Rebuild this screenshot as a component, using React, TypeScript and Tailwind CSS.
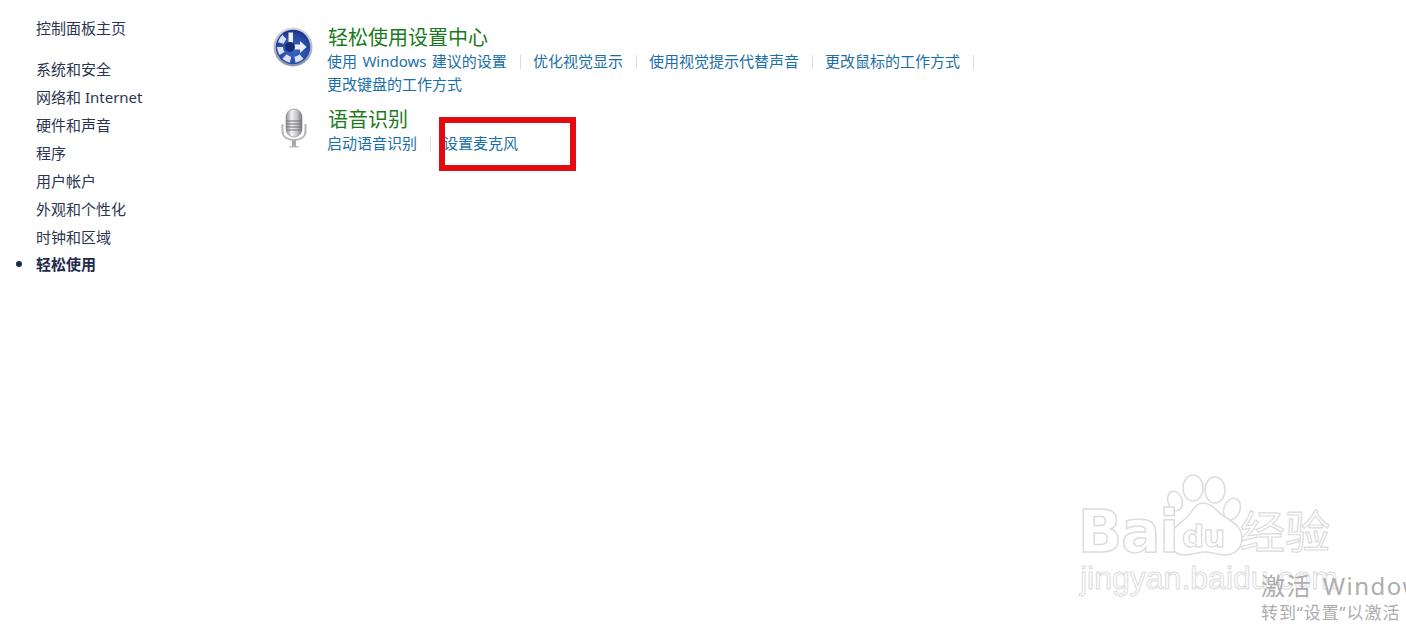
const FONT = "font-['Noto_Sans','Noto_Sans_CJK_SC',sans-serif]"

const NAV = ['系统和安全', '网络和 Internet', '硬件和声音', '程序', '用户帐户', '外观和个性化', '时钟和区域']

function EaseIcon() {
  return (
    <svg width="40" height="40" viewBox="0 0 40 40" className="block">
      <defs>
        <radialGradient id="ease-bg" cx="50%" cy="60%" r="60%">
          <stop offset="0%" stopColor="#3a66c4" />
          <stop offset="70%" stopColor="#2a4aa8" />
          <stop offset="100%" stopColor="#1b3284" />
        </radialGradient>
        <linearGradient id="ease-rim" x1="0" x2="0" y1="0" y2="1">
          <stop offset="0%" stopColor="#d5d9e2" />
          <stop offset="100%" stopColor="#8d97ad" />
        </linearGradient>
      </defs>
      <circle cx="20" cy="20" r="19.5" fill="url(#ease-rim)" />
      <circle cx="20" cy="20" r="17.2" fill="url(#ease-bg)" />
      <g fill="none" stroke="#e8edf8" strokeWidth="6" opacity="0.92">
        <path d="M11.5 10 A13 13 0 0 0 7.800 16" />
        <path d="M7 20 A13 13 0 0 0 9 26.500" />
        <path d="M11.500 29.500 A13 13 0 0 0 17.500 32.800" />
        <path d="M22 32.800 A13 13 0 0 0 28.500 29.500" />
      </g>
      <path d="M15.500 5.500h4.500v10h-4.500z" fill="#eef1f9" />
      <path d="M21 17.500h6v-3.500l6.500 6-6.500 6v-3.500h-6z" fill="#eef1f9" />
      <circle cx="17" cy="20" r="5" fill="#142c74" />
    </svg>
  )
}

function MicIcon() {
  return (
    <svg width="30" height="42" viewBox="0 0 30 42" className="block">
      <defs>
        <linearGradient id="mic-body" x1="0" x2="1" y1="0" y2="0">
          <stop offset="0%" stopColor="#8c8c92" />
          <stop offset="35%" stopColor="#f2f2f4" />
          <stop offset="70%" stopColor="#c2c2c8" />
          <stop offset="100%" stopColor="#77777d" />
        </linearGradient>
      </defs>
      <path d="M3.500 16v7c0 6 5 9 11.500 9s11.500-3 11.500-9v-7" fill="none" stroke="#b4b4ba" strokeWidth="2" />
      <rect x="13" y="32" width="4" height="7" fill="#a8a8ae" />
      <rect x="10.500" y="38" width="9" height="1.500" fill="#b8b8be" />
      <rect x="7" y="1" width="16" height="28" rx="8" fill="url(#mic-body)" stroke="#85858b" strokeWidth="0.600" />
      <g stroke="#6f6f76" strokeWidth="1.200">
        <path d="M7.500 13h15M7.500 16h15M7.500 19h15M7.500 22h15" />
      </g>
    </svg>
  )
}

function Links({ items }: { items: string[] }) {
  return (
    <>
      {items.map(t => (
        <span key={t} className="flex items-center">
          <a className="text-[15px] leading-[23px] text-[#1a6fa8] whitespace-nowrap [word-spacing:1.5px]">{t}</a>
          <span className="ml-[13px] mr-[12px] h-[14px] w-px bg-[#d9dde0]" />
        </span>
      ))}
    </>
  )
}

function PawLogo() {
  return (
    <svg width="84" height="90" viewBox="0 0 84 90" className="block">
      <g fill="#fff" stroke="#dcdcdc" strokeWidth="1.500">
        <ellipse cx="10" cy="31" rx="7" ry="10" transform="rotate(-18 10 31)" />
        <ellipse cx="28" cy="18" rx="10" ry="13" />
        <ellipse cx="50" cy="20" rx="10" ry="13" />
        <ellipse cx="67" cy="39" rx="8" ry="11" transform="rotate(20 67 39)" />
        <path d="M38 33C47 33 52 42 60 47C70 53 77 58 77 68C77 80 68 85 60 85C52 85 46 82 40 82C34 82 28 85 20 85C11 85 5 79 5 70C5 60 13 55 20 49C27 43 30 33 38 33Z" />
      </g>
    </svg>
  )
}

export default function App() {
  return (
    <div className={`${FONT} relative h-[624px] w-[1406px] overflow-hidden bg-white`}>
      <div className="flex items-start">
        {/* Sidebar */}
        <nav className="w-[273px] shrink-0 pl-[36px] pt-[18px] text-[15px] leading-[28px] text-[#2b3550]">
          <div className="mb-[16px] leading-[21px]">控制面板主页</div>
          {NAV.map(n => (
            <div key={n}>{n}</div>
          ))}
          <div className="relative -mt-px font-bold text-[#1f2a4d]">
            <span className="absolute left-[-20px] top-[11px] h-[6px] w-[6px] rounded-full bg-[#1b2a5c]" />
            轻松使用
          </div>
        </nav>

        {/* Main */}
        <main className="flex flex-col pt-[26px]">
          <section className="flex">
            <div className="mr-[14px] mt-[1px] w-[40px] shrink-0">
              <EaseIcon />
            </div>
            <div className="w-[680px]">
              <h2 className="ml-px text-[20px] leading-[24px] text-[#1c7a1c]">轻松使用设置中心</h2>
              <div className="flex flex-wrap">
                <Links items={['使用 Windows 建议的设置', '优化视觉显示', '使用视觉提示代替声音', '更改鼠标的工作方式']} />
                <a className="text-[15px] leading-[23px] text-[#1a6fa8]">更改键盘的工作方式</a>
              </div>
            </div>
          </section>
          <section className="mt-[12px] flex">
            <div className="mr-[10px] w-[44px] shrink-0 pl-[6px]">
              <MicIcon />
            </div>
            <div>
              <h2 className="ml-px text-[20px] leading-[24px] text-[#1c7a1c]">语音识别</h2>
              <div className="flex">
                <Links items={['启动语音识别']} />
                <a className="text-[15px] leading-[23px] text-[#1a6fa8]">设置麦克风</a>
              </div>
            </div>
          </section>
        </main>
      </div>

      {/* Red annotation box */}
      <div className="absolute left-[439px] top-[117px] h-[54px] w-[137px] border-[6px] border-[#e30a12]" />

      {/* Baidu watermark */}
      <div className="absolute left-[1165px] top-[470px]">
        <PawLogo />
      </div>
      <div className="absolute left-[1078px] top-[494px] font-['DejaVu_Sans',sans-serif] text-[58px] font-bold leading-[76px] tracking-[-1px] text-white [-webkit-text-stroke:1.5px_#dcdcdc]">
        Bai
      </div>
      <div className="absolute left-[1182px] top-[516px] font-['DejaVu_Sans',sans-serif] text-[31px] font-bold leading-[40px] tracking-[-1px] text-white [-webkit-text-stroke:1px_#d4d4d4]">
        du
      </div>
      <div className="absolute left-[1240px] top-[506px] text-[45px] leading-[52px] text-white [-webkit-text-stroke:1.2px_#dcdcdc]">
        经验
      </div>
      <div className="absolute left-[1080px] top-[556px] font-['Liberation_Sans',sans-serif] text-[32px] leading-[44px] text-white [-webkit-text-stroke:1px_#dcdcdc]">
        jingyan.baidu.com
      </div>

      {/* Windows activation */}
      <div className="absolute left-[1261px] top-[569px] whitespace-nowrap text-[24px] leading-[34px] tracking-[1.5px] text-[#adadad] [word-spacing:3px]">
        激活 Windows
      </div>
      <div className="absolute left-[1261px] top-[601px] whitespace-nowrap text-[17px] leading-[24px] tracking-[0.9px] text-[#adadad]">
        转到“设置”以激活
      </div>
    </div>
  )
}
